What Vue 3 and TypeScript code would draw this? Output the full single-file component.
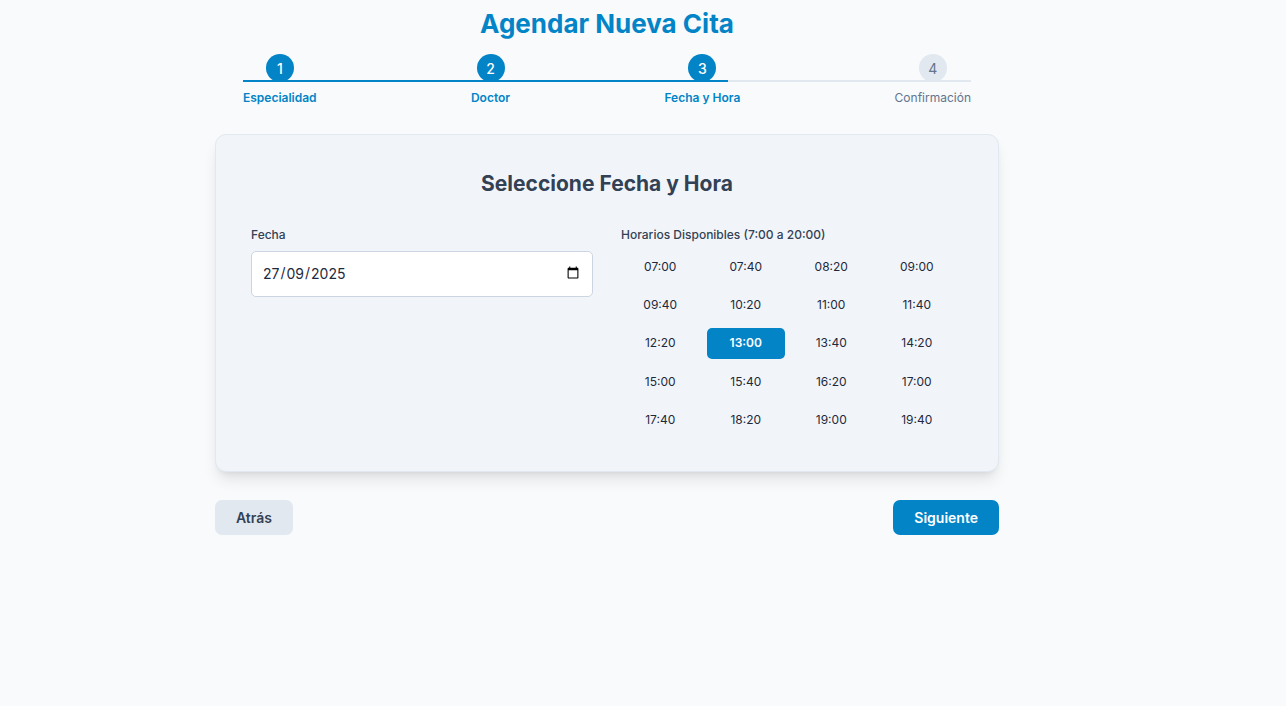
<script setup lang="ts">
import { computed, ref } from 'vue'

interface Step {
  number: number
  label: string
}

const steps: Step[] = [
  { number: 1, label: 'Especialidad' },
  { number: 2, label: 'Doctor' },
  { number: 3, label: 'Fecha y Hora' },
  { number: 4, label: 'Confirmación' },
]

const currentStep = ref(3)
const date = ref('2025-09-27')
const selectedTime = ref('13:00')

const FIRST_SLOT = 7 * 60
const LAST_SLOT = 20 * 60
const SLOT_MINUTES = 40

const times = computed<string[]>(() => {
  const slots: string[] = []
  for (let t = FIRST_SLOT; t < LAST_SLOT; t += SLOT_MINUTES) {
    const hours = String(Math.floor(t / 60)).padStart(2, '0')
    const minutes = String(t % 60).padStart(2, '0')
    slots.push(`${hours}:${minutes}`)
  }
  return slots
})

/* Share of the line covered by the steps already completed. */
const progressWidth = computed(() => `${((currentStep.value - 1) / (steps.length - 1)) * 100}%`)

function back() {
  if (currentStep.value > 1) currentStep.value -= 1
}

function next() {
  if (currentStep.value < steps.length) currentStep.value += 1
}
</script>

<template>
  <main class="page">
    <div class="wizard">
      <h1 class="title">Agendar Nueva Cita</h1>

      <div class="stepper">
        <ol class="steps">
          <li
            v-for="step in steps"
            :key="step.number"
            class="step"
            :class="{ active: step.number <= currentStep }"
          >
            <span class="circle">{{ step.number }}</span>
            <span class="step-label">{{ step.label }}</span>
          </li>
        </ol>
        <div class="track">
          <div class="track-fill" :style="{ width: progressWidth }"></div>
        </div>
      </div>

      <section class="card">
        <h2 class="subtitle">Seleccione Fecha y Hora</h2>
        <div class="columns">
          <div class="field">
            <label class="label" for="date">Fecha</label>
            <input id="date" v-model="date" class="date" type="date" lang="es" />
          </div>
          <div class="field">
            <span id="times-label" class="label">Horarios Disponibles (7:00 a 20:00)</span>
            <div class="times" role="group" aria-labelledby="times-label">
              <button
                v-for="time in times"
                :key="time"
                type="button"
                class="time"
                :class="{ selected: time === selectedTime }"
                :aria-pressed="time === selectedTime"
                @click="selectedTime = time"
              >
                {{ time }}
              </button>
            </div>
          </div>
        </div>
      </section>

      <div class="actions">
        <button type="button" class="btn secondary" @click="back">Atrás</button>
        <button type="button" class="btn primary" @click="next">Siguiente</button>
      </div>
    </div>
  </main>
</template>

<style>
body {
  margin: 0;
  background: #f8fafc;
}
</style>

<style scoped>
.page {
  box-sizing: border-box;
  min-height: 100vh;
  padding: 7px 72px 28px 0;
  background: #f8fafc;
  color: #1e293b;
  font-family: Inter, "Liberation Sans", sans-serif;
  font-size: 14px;
  line-height: 21px;
}

.wizard {
  max-width: 784px;
  margin: 0 auto;
}

.title {
  margin: 0 0 14px;
  color: #0284c7;
  font-size: 26px;
  line-height: 33px;
  font-weight: 700;
  text-align: center;
}

.stepper {
  position: relative;
  margin: 0 28px 28px;
}

.steps {
  display: flex;
  justify-content: space-between;
  margin: 0;
  padding: 0;
  list-style: none;
}

.step {
  display: flex;
  flex-direction: column;
  align-items: center;
  gap: 7px;
  color: #64748b;
}

.circle {
  display: flex;
  align-items: center;
  justify-content: center;
  width: 28px;
  height: 28px;
  border-radius: 50%;
  background: #e2e8f0;
}

.step-label {
  font-size: 12px;
  line-height: 17px;
}

.step.active {
  color: #0284c7;
  font-weight: 500;
}

.step.active .step-label {
  font-weight: 600;
}

.step.active .circle {
  background: #0284c7;
  color: #fff;
}

.track {
  position: absolute;
  top: 26px;
  left: 0;
  right: 0;
  height: 2px;
  background: #e2e8f0;
}

.track-fill {
  height: 100%;
  background: #0284c7;
}

.card {
  padding: 35px;
  border: 1px solid #e2e8f0;
  border-radius: 11px;
  background: #f1f5f9;
  box-shadow: 0 10px 15px -3px rgba(0, 0, 0, 0.1), 0 4px 6px -4px rgba(0, 0, 0, 0.1);
}

.subtitle {
  margin: 0 0 28px;
  color: #334155;
  font-size: 21px;
  line-height: 28px;
  font-weight: 700;
  text-align: center;
}

.columns {
  display: grid;
  grid-template-columns: repeat(auto-fit, minmax(280px, 1fr));
  gap: 28px;
  align-items: start;
}

.field {
  display: flex;
  flex-direction: column;
  gap: 7px;
}

.label {
  color: #334155;
  font-size: 12px;
  line-height: 18px;
  font-weight: 500;
}

.date {
  box-sizing: border-box;
  width: 100%;
  height: 46px;
  padding: 9px 10px 11px;
  border: 1px solid #cbd5e1;
  border-radius: 5px;
  background: #fff;
  color: #1e293b;
  font: inherit;
}

/* Day, month, year order whatever the browser's locale. */
.date::-webkit-datetime-edit-fields-wrapper {
  display: inline-grid;
  grid-auto-flow: column;
}

.date::-webkit-datetime-edit-day-field {
  grid-area: 1 / 1;
}

.date::-webkit-datetime-edit-month-field {
  grid-area: 1 / 3;
}

.date::-webkit-datetime-edit-year-field {
  grid-area: 1 / 5;
}

.date::-webkit-datetime-edit-text {
  grid-row: 1;
}

.times {
  display: grid;
  grid-template-columns: repeat(4, 1fr);
  grid-auto-rows: 1fr;
  gap: 7px;
  min-height: 185px;
  padding-right: 7px;
}

.time {
  padding: 6px;
  border: 0;
  border-radius: 5px;
  background: transparent;
  color: #1e293b;
  font: inherit;
  font-size: 12px;
  line-height: 18px;
  cursor: pointer;
}

.time.selected {
  background: #0284c7;
  color: #fff;
  font-weight: 600;
}

.actions {
  display: flex;
  justify-content: space-between;
  margin-top: 28px;
}

.btn {
  padding: 7px 21px;
  border: 0;
  border-radius: 7px;
  font: inherit;
  font-weight: 600;
  cursor: pointer;
}

.secondary {
  background: #e2e8f0;
  color: #334155;
}

.primary {
  background: #0284c7;
  color: #fff;
}
</style>
